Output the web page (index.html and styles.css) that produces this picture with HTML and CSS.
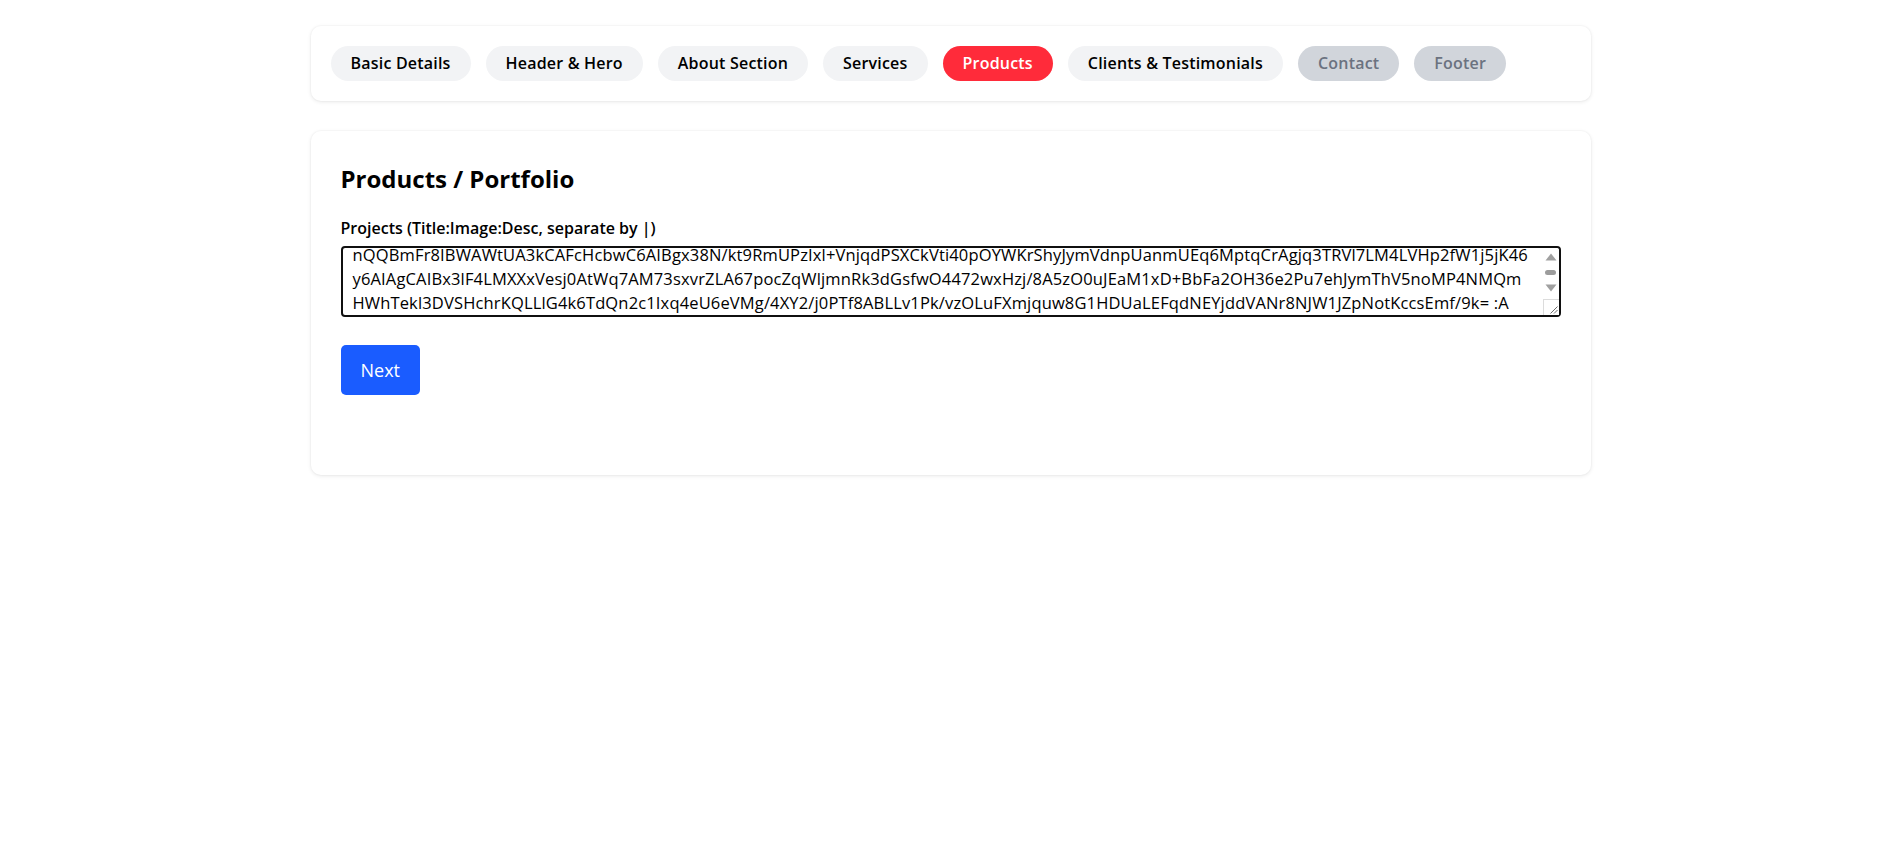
FILE: index.html
```html
<!DOCTYPE html>
<html lang="en">
<head>
<meta charset="utf-8">
<title>Products / Portfolio</title>
<link rel="stylesheet" href="styles.css">
</head>
<body>
<div class="page">
  <nav class="card steps">
    <span class="pill">Basic Details</span>
    <span class="pill">Header &amp; Hero</span>
    <span class="pill">About Section</span>
    <span class="pill">Services</span>
    <span class="pill pill-active">Products</span>
    <span class="pill">Clients &amp; Testimonials</span>
    <span class="pill pill-disabled">Contact</span>
    <span class="pill pill-disabled">Footer</span>
  </nav>
  <section class="card form-card">
    <h2 class="title">Products / Portfolio</h2>
    <label class="field-label" for="projects">Projects (Title:Image:Desc, separate by |)</label>
    <div class="area-wrap">
      <textarea id="projects" class="field-area" spellcheck="false">Website Redesign:data:image/jpeg;base64,/9j/4AAQSkZJRgABAQAAAQABAAD/2wCEAAkGBxITEhUSEhMWFhUXGBgYGBgYGBcYGBgYGBgXFxgYGBgYHSggGBolHRcVITEhJSkrLi4uFx8zODMtNygtLisBCgoKDg0OGhAQGy0lICUtLS0tLS0tLS0tLS0tLS0tLS0tLS0tLS0tLS0tLS0tLS0tLS0tLS0tLS0tLS0tLS0tLf
AAEQgAqAEsAwEiAAIRAQMRAf/EABsAAAIDAQEBAAAAAAAAAAAAAAQFAgMGAQAH/8QAQBAAAgEDAgQDBQYEBAUFAQAAAQIRAAMhEjEEQVFhBSJxEzKBkaEGQrHB0fAUI1LhYnKC8RUzQ5Ky
nQQBmFr8IBWAWtUA3kCAFcHcbwC6AIBgx38N/kt9RmUPzIxl+VnjqdPSXCkVti40pOYWKrShyJymVdnpUanmUEq6MptqCrAgjq3TRVl7LM4LVHp2fW1j5jK46
y6AIAgCAIBx3lF4LMXXxVesj0AtWq7AM73sxvrZLA67pocZqWljmnRk3dGsfwO4472wxHzj/8A5zO0uJEaM1xD+BbFa2OH36e2Pu7ehJymThV5noMP4NMQm
HWhTekl3DVSHchrKQLLlG4k6TdQn2c1Ixq4eU6eVMg/4XY2/j0PTf8ABLLv1Pk/vzOLuFXmjquw8G1HDUaLEFqdNEYjddVANr8NJW1JZpNotKccsEmf/9k= :A</textarea>
      <div class="fake-scroll" aria-hidden="true">
        <svg class="sb-up" width="12" height="8" viewBox="0 0 12 8"><path d="M6 0.5 L11.5 7.5 L0.5 7.5 Z" fill="#a0a0a0"/></svg>
        <span class="sb-thumb"></span>
        <svg class="sb-down" width="12" height="8" viewBox="0 0 12 8"><path d="M0.5 0.5 L11.5 0.5 L6 7.5 Z" fill="#a0a0a0"/></svg>
        <span class="sb-corner">
          <svg width="15" height="15" viewBox="0 0 15 15"><path d="M13.5 6.5 L6.5 13.5 M13.5 10 L10 13.5" stroke="#6e6e6e" stroke-width="1" fill="none"/></svg>
        </span>
      </div>
    </div>
    <div class="actions">
      <button class="btn-next" type="button">Next</button>
    </div>
  </section>
</div>
<script src="script.js"></script>
</body>
</html>
```
FILE: styles.css
```css
* { box-sizing: border-box; }
html, body { margin: 0; padding: 0; background: #ffffff; }
body {
  font-family: "Open Sans", "Noto Sans", "Liberation Sans", sans-serif;
  color: #000;
}
.page {
  max-width: 1280px;
  margin: 0 auto;
  padding: 26px 0;
}
.card {
  background: #fff;
  border-radius: 10px;
  box-shadow: 0 1px 4px rgba(0, 0, 0, 0.09), 0 0 0 1px rgba(0, 0, 0, 0.015);
}
.steps {
  display: flex;
  flex-wrap: wrap;
  gap: 15px;
  padding: 20px;
}
.pill {
  display: inline-block;
  padding: 7px 20px;
  font-size: 16px;
  line-height: 21px;
  font-weight: 600;
  letter-spacing: 0.2px;
  border-radius: 999px;
  background: #f2f3f5;
  color: #000;
  white-space: nowrap;
}
.pill-active { background: #ff2b3a; color: #fff; }
.pill-disabled { background: #d1d5db; color: #6b7280; }

.form-card {
  margin-top: 30px;
  padding: 30px 30px 80px;
}
.title {
  margin: 2px 0 23px;
  font-size: 24px;
  line-height: 32px;
  font-weight: 700;
}
.field-label {
  display: block;
  margin-bottom: 7px;
  font-size: 16px;
  line-height: 21px;
  font-weight: 600;
}
.area-wrap {
  position: relative;
}
.field-area {
  display: block;
  width: 100%;
  height: 71px;
  padding: 2px 30px 0 10px;
  border: 2px solid #101010;
  border-radius: 4px;
  font-family: inherit;
  font-size: 16.5px;
  letter-spacing: 0.15px;
  line-height: 24px;
  color: #000;
  white-space: pre;
  overflow: hidden;
  resize: none;
  outline: none;
  background: #fff;
}
.fake-scroll {
  position: absolute;
  top: 2px;
  right: 2px;
  bottom: 2px;
  width: 16px;
  display: flex;
  flex-direction: column;
  align-items: center;
  background: #fff;
  border-radius: 0 3px 3px 0;
}
.sb-up { display: block; margin-top: 5px; }
.sb-thumb {
  display: block;
  width: 11px;
  height: 5px;
  margin-top: 9px;
  border-radius: 3px;
  background: #9c9c9c;
}
.sb-down { display: block; margin-top: 9px; }
.sb-corner {
  display: block;
  margin-top: auto;
  width: 16px;
  height: 16px;
  border-top: 1px solid #dcdcdc;
  border-left: 1px solid #dcdcdc;
  background: #fff;
}
.sb-corner svg { display: block; }
.actions {
  margin-top: 28px;
}
.btn-next {
  height: 50px;
  padding: 0 20px;
  border: none;
  border-radius: 5px;
  background: #1a5cff;
  color: #fff;
  font-family: inherit;
  font-size: 18px;
  cursor: pointer;
}
```
FILE: script.js
```js
var area = document.getElementById('projects');
area.scrollTop = area.scrollHeight;
```
